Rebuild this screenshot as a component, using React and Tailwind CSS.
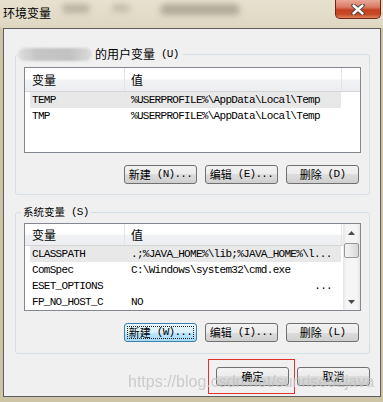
import React from "react";

const MONO = "font-['Liberation_Mono','Noto_Sans_CJK_SC',monospace] text-[11px] tracking-[-0.7px]";

function Label({ zh, key2, size = "text-[11px]" }) {
  return (
    <span className="flex items-center whitespace-pre">
      <span className={size}>{zh}</span>
      <span className={MONO}>{key2}</span>
    </span>
  );
}

function WinButton({ zh, keys, focused }) {
  return (
    <button
      className={
        focused
          ? "h-[19px] w-[73px] rounded-[3px] border border-[#3c7fb1] bg-[linear-gradient(#eaf6fd_0%,#d9f0fc_50%,#bee6fd_50%,#a7d9f5_100%)] p-[2px]"
          : "h-[19px] w-[73px] rounded-[3px] border border-[#707070] bg-[linear-gradient(#f2f2f2_0%,#ebebeb_50%,#dddddd_50%,#cfcfcf_100%)] p-[2px]"
      }
    >
      <div
        className={
          focused
            ? "flex h-full w-full items-center justify-center border border-dotted border-[#222]"
            : "flex h-full w-full items-center justify-center"
        }
      >
        <Label zh={zh} key2={keys} />
      </div>
    </button>
  );
}

function Header({ tall }) {
  return (
    <div
      className={`flex border-b border-[#d5d5d5] bg-[linear-gradient(#ffffff_0%,#ffffff_45%,#f1f2f4_55%,#eceef1_100%)] text-[12px] ${
        tall ? "h-[25px]" : "h-[24px]"
      }`}
    >
      <div className="flex w-[100px] items-center border-r border-[#e2e4e7] pl-[7px]">变量</div>
      <div className="flex w-[217px] items-center border-r border-[#e2e4e7] pl-[6px]">值</div>
      <div className="flex-1" />
    </div>
  );
}

function Row({ name, value, selected, dots }) {
  return (
    <div
      className={`ml-[5px] flex h-[16px] w-[311px] shrink-0 items-center whitespace-pre ${MONO} ${
        selected ? "bg-[#e8e8e8]" : ""
      }`}
    >
      <span className="w-[94px] pl-[2px]">{name}</span>
      {dots ? (
        <span className="ml-auto pr-[9px]">...</span>
      ) : (
        <span className="pl-[7px]">{value}</span>
      )}
    </div>
  );
}

function Arrow({ up }) {
  return (
    <svg width="7" height="4" viewBox="0 0 7 4">
      <path d={up ? "M0 4 L3.5 0 L7 4 Z" : "M0 0 L3.5 4 L7 0 Z"} fill="#4a4a4a" />
    </svg>
  );
}

function ScrollBar() {
  return (
    <div className="flex w-[17px] flex-col bg-[linear-gradient(90deg,#e6e6e6_0%,#f5f5f5_20%,#f5f5f5_80%,#e6e6e6_100%)]">
      <div className="flex h-[17px] items-center justify-center">
        <Arrow up />
      </div>
      <div className="mx-[1px] mt-[2px] h-[15px] rounded-[2px] border border-[#979797] bg-[linear-gradient(90deg,#f4f4f4_0%,#e8e8e8_50%,#d6d6d6_100%)]" />
      <div className="flex-1" />
      <div className="flex h-[17px] items-center justify-center">
        <Arrow />
      </div>
    </div>
  );
}

function GroupButtons({ first, firstKey, second, secondKey, third, thirdKey, focusFirst }) {
  return (
    <div className="mt-[12px] flex justify-end gap-[8px] pr-[2px]">
      <WinButton zh={first} keys={firstKey} focused={focusFirst} />
      <WinButton zh={second} keys={secondKey} />
      <WinButton zh={third} keys={thirdKey} />
    </div>
  );
}

function TitleBar() {
  return (
    <div className="relative flex h-[28px] items-start bg-[linear-gradient(#e7e2d0_0%,#ddd7c2_100%)]">
      <div className="absolute left-[62px] top-[4px] h-[9px] w-[28px] rounded-full bg-[#8d8777] opacity-50 blur-[3px]" />
      <div className="absolute left-[112px] top-[4px] h-[8px] w-[18px] rounded-full bg-[#8d8777] opacity-40 blur-[3px]" />
      <div className="absolute left-[160px] top-[4px] h-[11px] w-[80px] rounded-full bg-[#7d7767] opacity-50 blur-[3px]" />
      <div className="relative pl-[3px] pt-[5px] text-[12px] leading-[16px]">环境变量</div>
      <div className="relative ml-auto mr-[2px] flex h-[19px] w-[46px] items-center justify-center rounded-b-[5px] border border-t-0 border-[#6a2618] bg-[linear-gradient(#eaa796_0%,#da7a63_40%,#c5411f_55%,#c84a27_80%,#e0865f_100%)]">
        <svg width="14" height="11" viewBox="0 0 14 11">
          <path d="M2.5 1.5 L11.5 9.5 M11.5 1.5 L2.5 9.5" stroke="#3a3a3a" strokeWidth="4.2" strokeLinecap="round" />
          <path d="M2.5 1.5 L11.5 9.5 M11.5 1.5 L2.5 9.5" stroke="#ffffff" strokeWidth="2.4" strokeLinecap="round" />
        </svg>
      </div>
    </div>
  );
}

export default function App() {
  return (
    <div className="relative flex h-[402px] w-[383px] flex-col overflow-hidden bg-[#ccc4a4] font-['Noto_Sans_CJK_SC',sans-serif] text-black">
      <TitleBar />
      <div className="ml-[3px] mr-[2px] flex h-[369px] flex-col border border-[#5e5e5e] bg-[#f0f0f0]">
        {/* user variables */}
        <fieldset className="ml-[11px] mt-[18px] w-[355px] rounded-[3px] border border-[#d5dfe5] p-0">
          <legend className="ml-[1px] flex h-[14px] items-center pl-[1px] pr-[3px] leading-[14px]">
            <span className="h-[13px] w-[74px] rounded-full bg-[linear-gradient(90deg,#dedede,#c6c6c6_25%,#c2c2c2_70%,#dcdcdc)] blur-[1px]" />
            <span className="ml-[3px]">
              <Label zh="的用户变量" key2=" (U)" size="text-[12px]" />
            </span>
          </legend>
          <div className="px-[8px] pb-[10px] pt-[6px]">
            <div className="flex h-[86px] flex-col overflow-hidden border border-[#828790] bg-white">
              <Header />
              <Row name="TEMP" value="%USERPROFILE%\AppData\Local\Temp" selected />
              <Row name="TMP" value="%USERPROFILE%\AppData\Local\Temp" />
            </div>
            <GroupButtons
              first="新建" firstKey=" (N)..."
              second="编辑" secondKey=" (E)..."
              third="删除" thirdKey=" (D)"
            />
          </div>
        </fieldset>

        {/* system variables */}
        <fieldset className="ml-[11px] mt-[10px] w-[355px] rounded-[3px] border border-[#d5dfe5] p-0">
          <legend className="ml-[5px] flex h-[14px] items-center px-[2px] leading-[14px]">
            <Label zh="系统变量" key2=" (S)" size="text-[10.5px]" />
          </legend>
          <div className="px-[8px] pb-[11px] pt-[4px]">
            <div className="flex h-[88px] overflow-hidden border border-[#828790] bg-white">
              <div className="flex flex-1 flex-col overflow-hidden">
                <Header tall />
                <Row name="CLASSPATH" value=".;%JAVA_HOME%\lib;%JAVA_HOME%\l..." selected />
                <Row name="ComSpec" value="C:\Windows\system32\cmd.exe" />
                <Row name="ESET_OPTIONS" dots />
                <Row name="FP_NO_HOST_C" value="NO" />
              </div>
              <ScrollBar />
            </div>
            <GroupButtons
              first="新建" firstKey=" (W)..."
              second="编辑" secondKey=" (I)..."
              third="删除" thirdKey=" (L)"
              focusFirst
            />
          </div>
        </fieldset>

        <div className="mt-[13px] flex justify-end gap-[8px] pr-[10px]">
          <WinButton zh="确定" keys="" />
          <WinButton zh="取消" keys="" />
        </div>
      </div>

      {/* annotation and watermark */}
      <div className="absolute left-[208px] top-[359px] h-[35px] w-[87px] border border-[#e3302b]" />
      <div className="absolute left-[128px] top-[372px] whitespace-pre font-['Liberation_Sans',sans-serif] text-[16px] leading-[20px] text-[#c2c2c2] opacity-80">
        https://blog.csdn.net/sunrise52java
      </div>
    </div>
  );
}
